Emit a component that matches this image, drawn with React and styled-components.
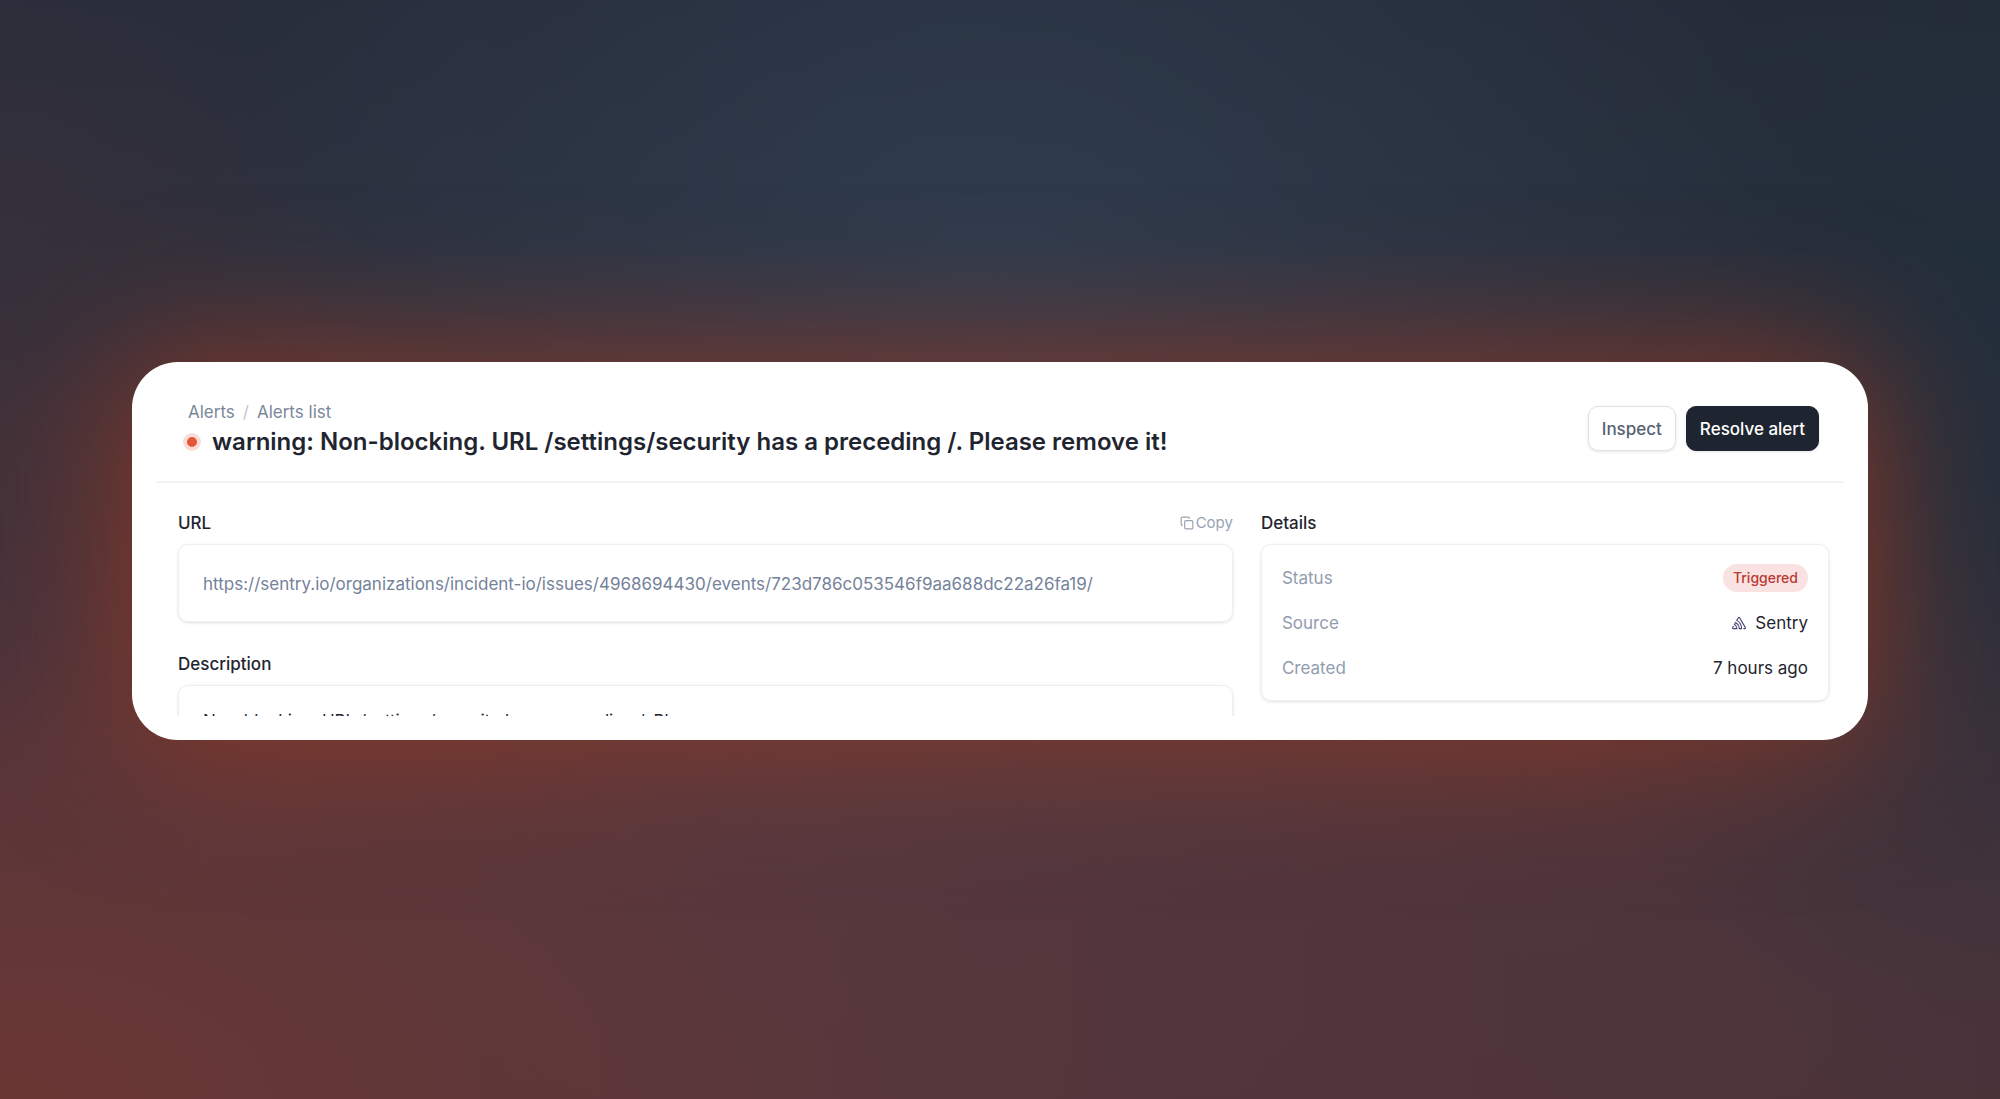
import styled, { createGlobalStyle } from 'styled-components';
import { Copy } from 'lucide-react';
import { SiSentry } from 'react-icons/si';

const url = 'https://sentry.io/organizations/incident-io/issues/4968694430/events/723d786c053546f9aa688dc22a26fa19/';

const details = [
    {
        label: 'Status',
        value: <Badge>Triggered</Badge>
    },
    {
        label: 'Source',
        value: <><SiSentry size={14} color="#4b4273" /> Sentry</>
    },
    {
        label: 'Created',
        value: '7 hours ago'
    },
];

function Badge({ children }) {
    return <Pill>{children}</Pill>;
}

function App() {
    return (
        <Page>
            <GlobalStyle />
            <Card>
                <Viewport>
                    <Header>
                        <div>
                            <Breadcrumbs>
                                <a href="#alerts">Alerts</a>
                                <span>/</span>
                                <a href="#list">Alerts list</a>
                            </Breadcrumbs>
                            <TitleRow>
                                <Dot />
                                <Title>warning: Non-blocking. URL /settings/security has a preceding /. Please remove it!</Title>
                            </TitleRow>
                        </div>
                        <Actions>
                            <Button type="button">Inspect</Button>
                            <Button type="button" $primary>Resolve alert</Button>
                        </Actions>
                    </Header>
                    <Body>
                        <Column>
                            <section>
                                <SectionHead>
                                    <Label>URL</Label>
                                    <CopyButton type="button"><Copy size={14} strokeWidth={2} />Copy</CopyButton>
                                </SectionHead>
                                <Panel>
                                    <a href={url}>{url}</a>
                                </Panel>
                            </section>
                            <section>
                                <SectionHead>
                                    <Label>Description</Label>
                                </SectionHead>
                                <Note>
                                    Non-blocking. URL /settings/security has a preceding /. Please<br />
                                    remove it!
                                </Note>
                            </section>
                        </Column>
                        <section>
                            <SectionHead>
                                <Label>Details</Label>
                            </SectionHead>
                            <DetailList>
                                {details.map((item) => (
                                    <DetailRow key={item.label}>
                                        <dt>{item.label}</dt>
                                        <dd>{item.value}</dd>
                                    </DetailRow>
                                ))}
                            </DetailList>
                        </section>
                    </Body>
                </Viewport>
            </Card>
        </Page>
    );
}

const GlobalStyle = createGlobalStyle`
    * {
        box-sizing: border-box;
    }
    body {
        margin: 0;
        font-family: Inter, sans-serif;
    }
    a {
        color: inherit;
        text-decoration: none;
    }
    button {
        font-family: inherit;
        cursor: pointer;
    }
`;

const Page = styled.main`
    min-height: 100vh;
    display: flex;
    align-items: center;
    padding: 3px 132px 0;
    overflow: hidden;
    background:
        radial-gradient(ellipse 45% 42% at 0% 100%, rgba(120, 54, 46, 0.6), rgba(120, 54, 46, 0)),
        radial-gradient(ellipse 40% 60% at 50% 24%, rgba(52, 68, 88, 0.6), rgba(52, 68, 88, 0)),
        radial-gradient(ellipse 25% 50% at 100% 44%, rgba(30, 46, 60, 0.7), rgba(30, 46, 60, 0)),
        radial-gradient(ellipse 20% 45% at 0% 40%, rgba(74, 48, 54, 0.5), rgba(74, 48, 54, 0)),
        linear-gradient(90deg, rgba(70, 46, 54, 0.1), rgba(30, 42, 55, 0) 40%, rgba(32, 40, 50, 0.25) 100%),
        linear-gradient(#262d3b 0%, #2b323f 30%, #57383e 68%, #57373c 100%);
`;

const Card = styled.div`
    flex: 1;
    min-width: 0;
    padding: 24px;
    border-radius: 46px;
    background: #fff;
    box-shadow: 0 0 140px 10px rgba(146, 56, 36, 0.85);
`;

const Viewport = styled.div`
    max-height: 330px;
    overflow: hidden;
    color: #1f2530;
`;

const Header = styled.header`
    display: flex;
    justify-content: space-between;
    align-items: flex-start;
    padding: 14px 25px 21px 27px;
    border-bottom: 2px solid #f3f3f4;
`;

const Breadcrumbs = styled.nav`
    display: flex;
    gap: 8px;
    padding-left: 5px;
    font-size: 17px;
    line-height: 24px;
    color: #7b879b;
    span {
        color: #c0c7d2;
    }
`;

const TitleRow = styled.div`
    display: flex;
    align-items: center;
    gap: 11px;
`;

const Dot = styled.span`
    width: 18px;
    height: 18px;
    border: 4px solid #fbdcd6;
    border-radius: 50%;
    background: #e2593a;
`;

const Title = styled.h1`
    margin: 0;
    font-size: 24px;
    line-height: 36px;
    font-weight: 600;
`;

const Actions = styled.div`
    display: flex;
    gap: 10px;
    padding-top: 6px;
`;

const Button = styled.button`
    height: 45px;
    padding: 0 13px;
    border: 1px solid ${({ $primary }) => ($primary ? '#1f2530' : '#dde2ea')};
    border-radius: 10px;
    background: ${({ $primary }) => ($primary ? '#1f2530' : '#fff')};
    color: ${({ $primary }) => ($primary ? '#fff' : '#566275')};
    font-size: 17px;
    font-weight: 500;
    box-shadow: 0 1px 3px rgba(0, 0, 0, 0.1);
`;

const Body = styled.div`
    display: grid;
    grid-template-columns: 13fr 7fr;
    align-items: start;
    gap: 28px;
    padding: 28px 15px 0 22px;
`;

const Column = styled.div`
    display: grid;
    gap: 30px;
`;

const SectionHead = styled.div`
    display: flex;
    justify-content: space-between;
    align-items: center;
    height: 24px;
    margin-bottom: 9px;
`;

const Label = styled.h2`
    margin: 0;
    font-size: 17px;
    line-height: 24px;
    font-weight: 500;
`;

const CopyButton = styled.button`
    display: flex;
    align-items: center;
    gap: 2px;
    padding: 0;
    border: none;
    background: none;
    color: #98a2b3;
    font-size: 15px;
    line-height: 24px;
`;

const Panel = styled.div`
    padding: 26px 24px 24px;
    border: 1px solid #efeff1;
    border-radius: 10px;
    box-shadow: 0 1px 3px rgba(0, 0, 0, 0.12);
    color: #74829a;
    font-size: 17px;
    line-height: 26px;
`;

const Note = styled(Panel)`
    padding: 22px 24px;
    color: #1f2530;
`;

const DetailList = styled.dl`
    display: grid;
    gap: 17px;
    margin: 0;
    padding: 19px 20px 18px;
    border: 1px solid #efeff1;
    border-radius: 10px;
    box-shadow: 0 1px 3px rgba(0, 0, 0, 0.12);
`;

const DetailRow = styled.div`
    display: flex;
    justify-content: space-between;
    align-items: center;
    font-size: 17px;
    line-height: 28px;
    dt {
        color: #919cae;
    }
    dd {
        display: flex;
        align-items: center;
        gap: 9px;
        margin: 0;
    }
`;

const Pill = styled.span`
    padding: 0 10px;
    border-radius: 14px;
    background: #fae2e2;
    color: #b93a32;
    font-size: 14px;
    font-weight: 500;
`;

export default App;
